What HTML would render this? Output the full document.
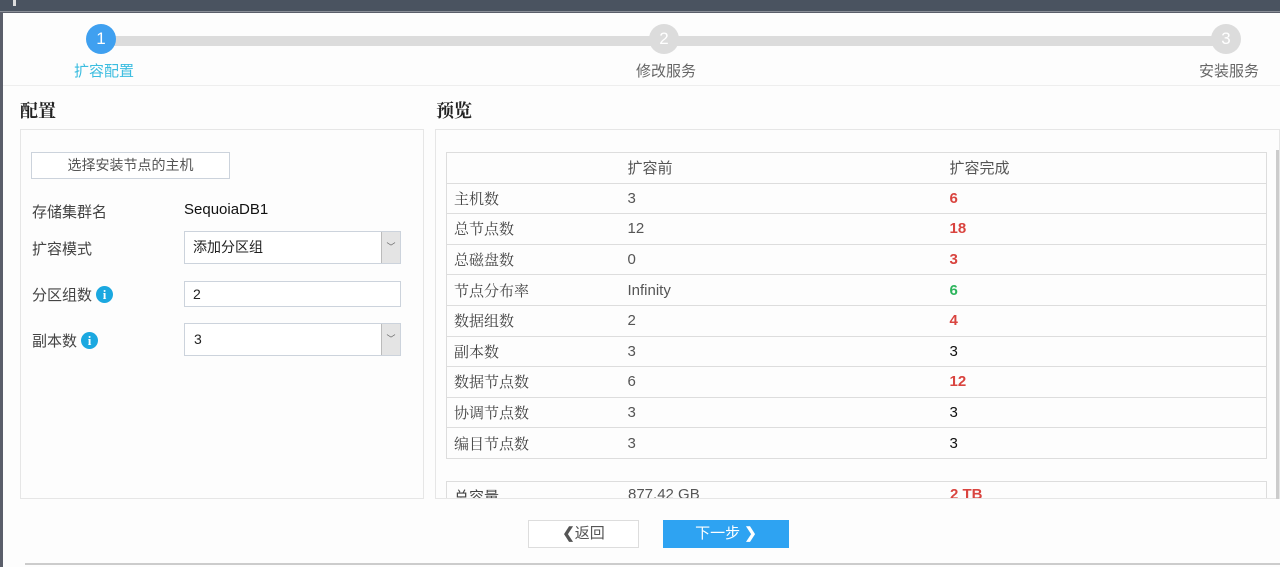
<!DOCTYPE html>
<html><head><meta charset="utf-8"><style>
*{margin:0;padding:0;box-sizing:border-box}
body{width:1280px;height:567px;overflow:hidden;background:#5a5e6a;font-family:"Liberation Sans","Noto Sans CJK SC",sans-serif;position:relative}
.top{position:absolute;left:0;top:0;width:1280px;height:12px;background:#4a5360;border-bottom:1px solid #8a8f98}
.top i{position:absolute;left:13px;top:0;width:3px;height:6px;background:#ddd}
.main{position:absolute;left:3px;top:13px;right:0;bottom:0;background:#fdfdfd}
.a{position:absolute}
.line{position:absolute;left:100px;top:23px;width:1126px;height:10px;background:#dcdcdc}
.st{position:absolute;width:30px;height:30px;border-radius:50%;background:#dcdcdc;color:#fff;text-align:center;line-height:30px;font-size:17px}
.sl{position:absolute;font-size:15px;color:#666}
h3{position:absolute;font-size:18px;font-weight:bold;color:#222;font-family:"Liberation Serif","Noto Serif CJK SC",serif}
.box{position:absolute;border:1px solid #e6e6e6;background:#fdfdfd}
.lbl{position:absolute;font-size:15px;color:#444}
.inp{position:absolute;border:1px solid #ccd3dc;background:#fff;font-size:14px;color:#222;padding-left:8px}
.dd{position:absolute;right:0;top:0;bottom:0;width:19px;background:#e4e4e4;border-left:1px solid #bbb;font-size:9px;color:#666;text-align:center}
.info{display:inline-block;width:17px;height:17px;border-radius:50%;background:#1ba8e0;color:#fff;font-weight:bold;font-size:13px;text-align:center;line-height:17px;font-family:"Liberation Serif",serif;vertical-align:1px;margin-left:4px}
table{position:absolute;left:446px;top:152px;width:821px;border-collapse:collapse;border:1px solid #ddd;font-size:15px}
td{height:30.6px;border-top:1px solid #ddd;padding-left:7px;color:#555}
td:nth-child(1){width:174px;font-family:"Liberation Serif","Noto Serif CJK SC",serif;color:#444}
td:nth-child(2){width:322px}
td:nth-child(3){color:#111}
.r{color:#d9443f!important;font-weight:bold}.g{color:#2cb55c!important;font-weight:bold}
</style></head><body>
<div class="top"><i></i></div>
<div class="main">
<div class="line"></div>
<div class="st" style="left:83px;top:11px;background:#3fa0f0">1</div>
<div class="st" style="left:646px;top:11px">2</div>
<div class="st" style="left:1208px;top:11px">3</div>
<div class="sl" style="left:71px;top:47px;color:#3bbde0">扩容配置</div>
<div class="sl" style="left:633px;top:47px">修改服务</div>
<div class="sl" style="left:1196px;top:47px">安装服务</div>
<div class="a" style="left:0;top:72px;width:1277px;height:1px;background:#eee"></div>
<h3 style="left:17px;top:84px">配置</h3>
<h3 style="left:433px;top:84px">预览</h3>
<div class="box" style="left:17px;top:116px;width:404px;height:370px"></div>
<div class="box" style="left:432px;top:116px;width:845px;height:370px"></div>
<div class="a" style="left:1273px;top:137px;width:3px;height:349px;background:#ccc"></div>
<div class="inp" style="left:28px;top:139px;width:199px;height:27px;text-align:center;padding:0;line-height:25px;color:#555">选择安装节点的主机</div>
<div class="lbl" style="left:29px;top:188px">存储集群名</div>
<div class="a" style="left:181px;top:188px;font-size:15px;color:#111">SequoiaDB1</div>
<div class="lbl" style="left:29px;top:225px">扩容模式</div>
<div class="inp" style="left:181px;top:218px;width:217px;height:33px;line-height:31px">添加分区组<div class="dd">﹀</div></div>
<div class="lbl" style="left:29px;top:271px">分区组数<span class="info">i</span></div>
<div class="inp" style="left:181px;top:268px;width:217px;height:26px;line-height:24px">2</div>
<div class="lbl" style="left:29px;top:317px">副本数<span class="info">i</span></div>
<div class="inp" style="left:181px;top:310px;width:217px;height:33px;line-height:31px;padding-left:9px">3<div class="dd">﹀</div></div>
</div>
<table>
<tr><td style="border-top:0"></td><td>扩容前</td><td style="color:#555">扩容完成</td></tr>
<tr><td>主机数</td><td>3</td><td class="r">6</td></tr>
<tr><td>总节点数</td><td>12</td><td class="r">18</td></tr>
<tr><td>总磁盘数</td><td>0</td><td class="r">3</td></tr>
<tr><td>节点分布率</td><td>Infinity</td><td class="g">6</td></tr>
<tr><td>数据组数</td><td>2</td><td class="r">4</td></tr>
<tr><td>副本数</td><td>3</td><td>3</td></tr>
<tr><td>数据节点数</td><td>6</td><td class="r">12</td></tr>
<tr><td>协调节点数</td><td>3</td><td>3</td></tr>
<tr><td>编目节点数</td><td>3</td><td>3</td></tr>
</table>
<div class="a" style="left:446px;top:481px;width:821px;height:17px;border:1px solid #ddd;border-bottom:0;overflow:hidden;background:#fdfdfd;font-size:15px">
<span class="a" style="left:7px;top:4px;color:#444">总容量</span><span class="a" style="left:181px;top:4px;color:#555">877.42 GB</span><span class="a" style="left:503px;top:4px;color:#d9443f;font-weight:bold">2 TB</span></div>
<div class="a" style="left:528px;top:520px;width:111px;height:28px;border:1px solid #ddd;background:#fff;text-align:center;line-height:26px;font-size:15px;color:#555"><b>❮</b>返回</div>
<div class="a" style="left:663px;top:520px;width:126px;height:28px;background:#2ea3f2;text-align:center;line-height:28px;font-size:15px;color:#fff">下一步 <b>❯</b></div>
<div class="a" style="left:25px;top:563px;width:1255px;height:2px;background:#ccc"></div>
</body></html>
